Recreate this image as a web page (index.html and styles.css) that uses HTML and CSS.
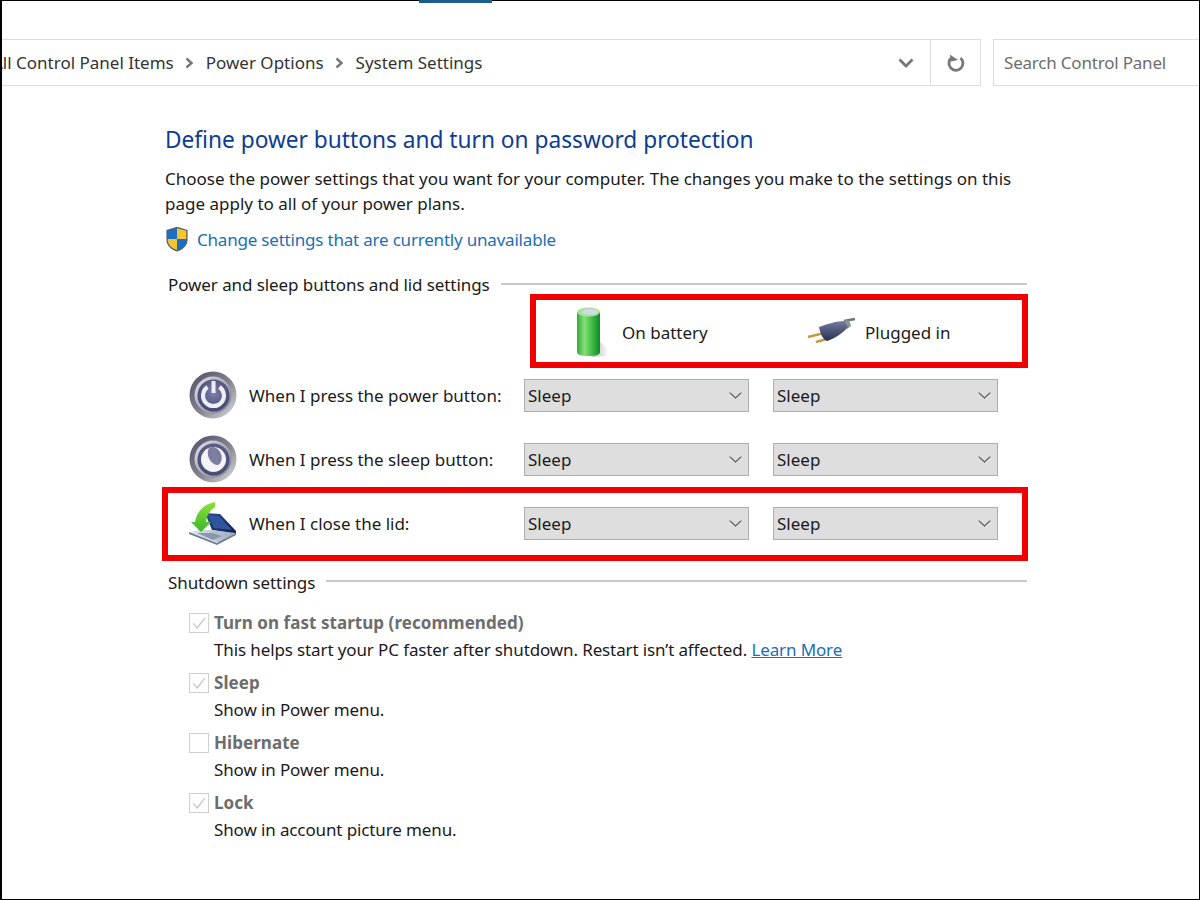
FILE: index.html
```html
<!DOCTYPE html>
<html lang="en">
<head>
<meta charset="utf-8">
<title>System Settings</title>
<link rel="stylesheet" href="styles.css">
</head>
<body>
<svg class="defs" width="0" height="0" aria-hidden="true">
  <defs>
    <linearGradient id="ringOuter" x1="0" y1="0" x2="1" y2="1">
      <stop offset="0" stop-color="#4f4f68"/><stop offset=".55" stop-color="#85858f"/><stop offset="1" stop-color="#e0e0e4"/>
    </linearGradient>
    <linearGradient id="ringInner" x1="0" y1="0" x2="1" y2="1">
      <stop offset="0" stop-color="#e4e4ea"/><stop offset="1" stop-color="#77778c"/>
    </linearGradient>
    <radialGradient id="face" cx=".5" cy=".42" r=".62">
      <stop offset="0" stop-color="#7f80a8"/><stop offset="1" stop-color="#41426c"/>
    </radialGradient>
    <linearGradient id="batt" x1="0" y1="0" x2="1" y2="0">
      <stop offset="0" stop-color="#35a838"/><stop offset=".32" stop-color="#86e078"/><stop offset=".62" stop-color="#45c048"/><stop offset="1" stop-color="#12882a"/>
    </linearGradient>
    <linearGradient id="battShadow" x1="0" y1="0" x2="1" y2="0">
      <stop offset="0" stop-color="#9a9a9a"/><stop offset="1" stop-color="#ffffff"/>
    </linearGradient>
    <linearGradient id="plugBody" x1="0" y1="0" x2="0" y2="1">
      <stop offset="0" stop-color="#737e9e"/><stop offset=".6" stop-color="#454d70"/><stop offset="1" stop-color="#2a3050"/>
    </linearGradient>
    <linearGradient id="arrow" x1="0" y1="0" x2="0" y2="1">
      <stop offset="0" stop-color="#8fe03a"/><stop offset="1" stop-color="#3ab52c"/>
    </linearGradient>
    <linearGradient id="lid" x1="0" y1="0" x2="1" y2="1">
      <stop offset="0" stop-color="#2d4a92"/><stop offset="1" stop-color="#0f1d50"/>
    </linearGradient>
    <linearGradient id="deck" x1="0" y1="0" x2="1" y2="0">
      <stop offset="0" stop-color="#e4e9ef"/><stop offset="1" stop-color="#9aa8bc"/>
    </linearGradient>
  </defs>
</svg>
<div class="window">
  <div class="tab-mark"></div>
  <header class="toolbar">
    <div class="address">
      <nav class="crumbs">
        <span>All Control Panel Items</span>
        <svg class="crumb-sep" viewBox="0 0 10 12"><path d="M2.500 1.500 7.500 6l-5 4.500" fill="none" stroke="#777" stroke-width="2.400"/></svg>
        <span>Power Options</span>
        <svg class="crumb-sep" viewBox="0 0 10 12"><path d="M2.500 1.500 7.500 6l-5 4.500" fill="none" stroke="#777" stroke-width="2.400"/></svg>
        <span>System Settings</span>
      </nav>
      <svg class="addr-chevron" viewBox="0 0 16 10"><path d="M1.500 1.500 8 8l6.500-6.500" fill="none" stroke="#777" stroke-width="2.800"/></svg>
    </div>
    <div class="refresh">
      <svg viewBox="0 0 18 20" width="18" height="20"><path d="M5 4.500a7 7 0 1 0 8.500.5" fill="none" stroke="#777" stroke-width="2.800"/><path d="M3.500 1v7h7z" fill="#777" transform="rotate(-12 6 5)"/></svg>
    </div>
    <div class="search">Search Control Panel</div>
  </header>

  <main class="content">
    <h1 class="title">Define power buttons and turn on password protection</h1>
    <p class="intro">Choose the power settings that you want for your computer. The changes you make to the settings on this page apply to all of your power plans.</p>
    <div class="change-row">
      <svg class="shield" viewBox="0 0 24 26">
        <path d="M12 .8 22.600 4v9.500c0 6-4.600 10-10.600 12C6 23.500 1.400 19.500 1.400 13.500V4z" fill="#55606a"/>
        <path d="M12 2.300V13H2.700V4.800z" fill="#1d6fc4"/>
        <path d="M12 2.300 21.300 4.800V13H12z" fill="#f6c42e"/>
        <path d="M2.700 13H12v11C7 22.300 2.700 19 2.700 13.500z" fill="#f6c42e"/>
        <path d="M21.300 13H12v11c5-1.700 9.300-5 9.300-10.500z" fill="#1d6fc4"/>
      </svg>
      <a class="link" href="#">Change settings that are currently unavailable</a>
    </div>

    <div class="group-head first-head"><span>Power and sleep buttons and lid settings</span><i class="rule"></i></div>

    <div class="legend marked">
      <div class="legend-item battery-col">
        <svg class="battery-icon" viewBox="0 0 42 50">
          <path d="M28 34 37 44 34 49 20 50z" fill="url(#battShadow)" opacity=".7"/>
          <path d="M5 5v40c0 3 5 4 11.500 4S28 48 28 45V5z" fill="url(#batt)"/>
          <ellipse cx="16.500" cy="5" rx="11.500" ry="4.500" fill="#a9e2a0"/>
          <ellipse cx="18" cy="5" rx="7.500" ry="2.800" fill="#d6d6ec"/>
        </svg>
        <span>On battery</span>
      </div>
      <div class="legend-item plug-col">
        <svg class="plug-icon" viewBox="0 0 50 28">
          <path d="M1 19 17 15" stroke="#c49a45" stroke-width="2.600" fill="none"/>
          <path d="M9 24 23 20" stroke="#c49a45" stroke-width="2.600" fill="none"/>
          <path d="M37 3 48 1" stroke="#6f747d" stroke-width="2.600" fill="none"/>
          <path d="M36 3 42 2 44 8 40 11z" fill="#8d929b"/>
          <path d="M12 9C20 6 30 3 37 3l4 6C36 15 27 21 20 23 15 21 13 14 12 9z" fill="url(#plugBody)"/>
        </svg>
        <span>Plugged in</span>
      </div>
    </div>

    <div class="action-row">
      <svg class="row-icon" viewBox="0 0 48 48">
        <circle cx="24" cy="24" r="23.500" fill="url(#ringOuter)"/>
        <circle cx="24" cy="24" r="18.500" fill="url(#ringInner)"/>
        <circle cx="24.500" cy="24.500" r="16" fill="url(#face)"/>
        <path d="M18.500 16a10.500 10.500 0 1 0 12 0" fill="none" stroke="#eeeef6" stroke-width="4"/>
        <path d="M24.500 10v12" stroke="#eeeef6" stroke-width="4"/>
      </svg>
      <span class="row-label">When I press the power button:</span>
      <div class="combo">Sleep<svg viewBox="0 0 13 7"><path d="M.7.7 6.500 6 12.300.7" fill="none" stroke="#555" stroke-width="1.100"/></svg></div>
      <div class="combo">Sleep<svg viewBox="0 0 13 7"><path d="M.7.7 6.500 6 12.300.7" fill="none" stroke="#555" stroke-width="1.100"/></svg></div>
    </div>

    <div class="action-row second">
      <svg class="row-icon" viewBox="0 0 48 48">
        <circle cx="24" cy="24" r="23.500" fill="url(#ringOuter)"/>
        <circle cx="24" cy="24" r="18.500" fill="url(#ringInner)"/>
        <circle cx="24.500" cy="24.500" r="16" fill="url(#face)"/>
        <circle cx="24.500" cy="24.500" r="12.500" fill="#f4f4fa"/>
        <path d="M21 12.500c5-2 10 2 11.500 8 1 5-1.500 10-4.500 9.500-3.500-.5-8-4-9-10-.5-3.500 0-6.500 2-7.500z" fill="#7c7d9f"/>
      </svg>
      <span class="row-label">When I press the sleep button:</span>
      <div class="combo">Sleep<svg viewBox="0 0 13 7"><path d="M.7.7 6.500 6 12.300.7" fill="none" stroke="#555" stroke-width="1.100"/></svg></div>
      <div class="combo">Sleep<svg viewBox="0 0 13 7"><path d="M.7.7 6.500 6 12.300.7" fill="none" stroke="#555" stroke-width="1.100"/></svg></div>
    </div>

    <div class="lid-box marked">
      <div class="action-row">
        <svg class="row-icon" viewBox="0 0 48 48">
          <path d="M16 14 31 15 47 32 47 35 23 31z" fill="url(#lid)"/>
          <path d="M19 16 30 17 43 31 25 29z" fill="#31559c"/>
          <path d="M0 33 10 31 23 31 47 34 30 44z" fill="url(#deck)"/>
          <path d="M8 34 24 34 33 37 24 41z" fill="#8a97ab"/>
          <path d="M0 33 28 44 47 34 47 36 28 46 0 35z" fill="#6f7d94"/>
          <path d="M26 3C15 5 8 12 6 23H2L12 33 22 23H17C18 16 21 11 26 8z" fill="url(#arrow)"/>
        </svg>
        <span class="row-label">When I close the lid:</span>
        <div class="combo">Sleep<svg viewBox="0 0 13 7"><path d="M.7.7 6.500 6 12.300.7" fill="none" stroke="#555" stroke-width="1.100"/></svg></div>
        <div class="combo">Sleep<svg viewBox="0 0 13 7"><path d="M.7.7 6.500 6 12.300.7" fill="none" stroke="#555" stroke-width="1.100"/></svg></div>
      </div>
    </div>

    <div class="group-head second-head"><span>Shutdown settings</span><i class="rule"></i></div>

    <ul class="options">
      <li class="option">
        <span class="check"><svg viewBox="0 0 20 20"><path d="M3.500 10.500 8 15.500 16.500 4.500" fill="none" stroke="#c4c4c4" stroke-width="1.400"/></svg></span>
        <div>
          <div class="opt-title">Turn on fast startup (recommended)</div>
          <div class="opt-desc">This helps start your PC faster after shutdown. Restart isn’t affected. <a class="link" href="#">Learn More</a></div>
        </div>
      </li>
      <li class="option">
        <span class="check"><svg viewBox="0 0 20 20"><path d="M3.500 10.500 8 15.500 16.500 4.500" fill="none" stroke="#c4c4c4" stroke-width="1.400"/></svg></span>
        <div>
          <div class="opt-title">Sleep</div>
          <div class="opt-desc">Show in Power menu.</div>
        </div>
      </li>
      <li class="option">
        <span class="check"></span>
        <div>
          <div class="opt-title">Hibernate</div>
          <div class="opt-desc">Show in Power menu.</div>
        </div>
      </li>
      <li class="option">
        <span class="check"><svg viewBox="0 0 20 20"><path d="M3.500 10.500 8 15.500 16.500 4.500" fill="none" stroke="#c4c4c4" stroke-width="1.400"/></svg></span>
        <div>
          <div class="opt-title">Lock</div>
          <div class="opt-desc">Show in account picture menu.</div>
        </div>
      </li>
    </ul>
  </main>
</div>
</body>
</html>
```

FILE: styles.css
```css
* { box-sizing: border-box; }
html, body { margin: 0; height: 100%; background: #fff; }
body {
  font-family: "Noto Sans", "Open Sans", sans-serif;
  font-size: 17px;
  color: #1a1a1a;
  overflow: hidden;
}
.defs { position: absolute; }
.window {
  position: relative;
  height: 900px;
  border: 1px solid #000;
  border-left-width: 2px;
}
.tab-mark {
  position: absolute;
  left: 417px;
  top: -1px;
  width: 73px;
  height: 3px;
  background: #1d5c8c;
}
.toolbar {
  display: flex;
  height: 47px;
  margin-top: 38px;
}
.address {
  flex: 0 0 929px;
  display: flex;
  align-items: center;
  justify-content: space-between;
  padding-right: 16px;
  border: 1px solid #dcdcdc;
  border-left: 0;
  overflow: hidden;
}
.crumbs { display: flex; align-items: center; margin-left: -10px; color: #333; white-space: nowrap; }
.crumb-sep { width: 10px; height: 12px; margin: 0 12px 0 10px; }
.addr-chevron { width: 16px; height: 10px; }
.refresh {
  flex: 0 0 50px;
  display: flex;
  align-items: center;
  justify-content: center;
  border: 1px solid #dcdcdc;
  border-left: 0;
}
.search {
  flex: 1;
  margin-left: 12px;
  padding-left: 10px;
  display: flex;
  align-items: center;
  color: #6d6d6d;
  letter-spacing: -.2px;
  border: 1px solid #dcdcdc;
  border-right: 0;
}
.content { padding: 38px 172px 0 163px; }
.title { margin: 0; font-size: 22.700px; line-height: 32px; font-weight: 400; color: #0c3d91; }
.intro { margin: 10px 0 0; line-height: 25px; }
.change-row { display: flex; align-items: center; height: 28px; margin-top: 9px; }
.change-row .link { letter-spacing: -.2px; }
.shield { width: 24px; height: 26px; margin-right: 8px; }
.link { color: #1a6fb5; text-decoration: none; }
.opt-desc .link { text-decoration: underline; }
.group-head { display: flex; align-items: center; height: 24px; padding-left: 3px; letter-spacing: -.08px; }
.group-head span { margin-right: 11px; }
.rule { flex: 1; height: 2px; background: #c8c8c8; margin-top: -3px; }
.first-head { margin-top: 20px; height: 21px; }
.first-head span { padding-top: 1px; }
.first-head .rule { margin-top: 1px; }
.marked { border: 6px solid #f00000; }
.legend {
  display: flex;
  align-items: center;
  height: 74px;
  margin: 0 -1px 0 365px;
  padding: 2px 0 0 36px;
}
.legend-item { display: flex; align-items: center; }
.battery-col { width: 235px; }
.battery-icon { width: 42px; height: 50px; margin-right: 8px; }
.plug-icon { width: 50px; height: 28px; margin-right: 8px; }
.action-row {
  display: flex;
  align-items: center;
  height: 49px;
  margin-top: 3px;
  padding-left: 24px;
}
.second { margin-top: 15px; }
.row-icon { width: 48px; height: 48px; margin: -2px 12px 0 0; flex: none; }
.row-label { width: 275px; flex: none; }
.combo {
  flex: none;
  width: 225px;
  height: 33px;
  margin-right: 24px;
  padding: 0 6px 0 3px;
  display: flex;
  align-items: center;
  justify-content: space-between;
  background: #dedede;
  border: 1px solid #adadad;
}
.combo svg { width: 13px; height: 7px; }
.lid-box { margin: 3px -1px 0 -3px; padding: 6px 0 7px; }
.lid-box .action-row { margin-top: 0; padding-left: 21px; }
.second-head { margin-top: 9px; }
.options { list-style: none; margin: 15px 0 0; padding: 0 0 0 24px; }
.option { display: flex; height: 54px; margin-bottom: 6px; }
.check {
  flex: none;
  width: 20px;
  height: 20px;
  margin: 4px 5px 0 0;
  border: 1px solid #cfcfcf;
  background: #fff;
}
.check svg { display: block; width: 18px; height: 18px; }
.opt-title { height: 27px; line-height: 27px; font-weight: 700; color: #6d6d6d; letter-spacing: .05px; }
.opt-desc { height: 27px; line-height: 27px; white-space: nowrap; letter-spacing: -.12px; }
```
